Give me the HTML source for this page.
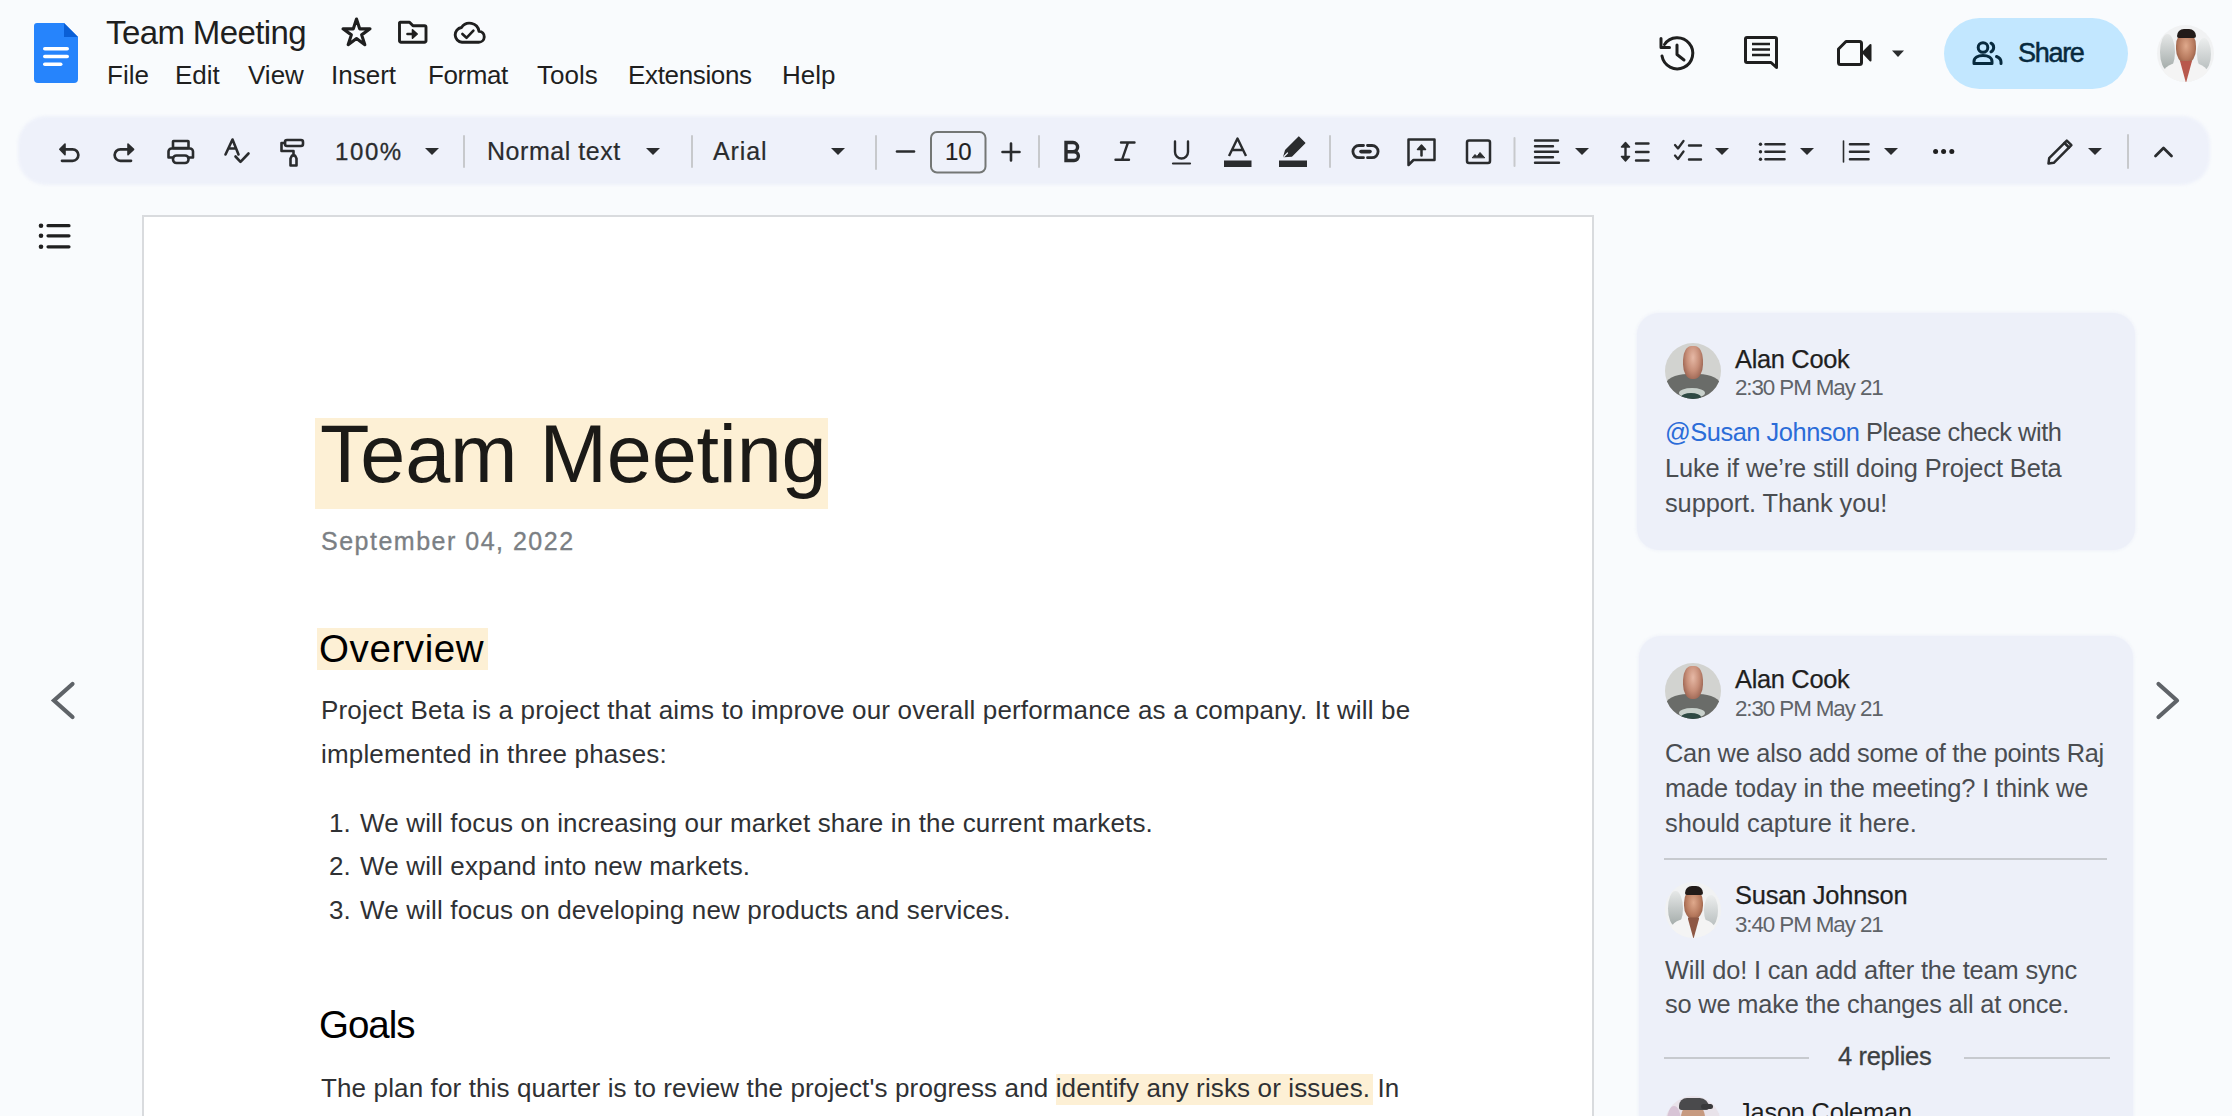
<!DOCTYPE html>
<html><head><meta charset="utf-8">
<style>
*{box-sizing:border-box;margin:0;padding:0}
html,body{width:2232px;height:1116px;overflow:hidden;background:#f9fbfd;font-family:"Liberation Sans",sans-serif;color:#1f1f1f}
.a{position:absolute;white-space:nowrap;line-height:1}
svg.i{position:absolute;overflow:visible}
</style></head><body>

<!-- Header -->
<svg class="i" style="left:34px;top:23px" width="44" height="60" viewBox="0 0 44 60">
  <path d="M3 0H30L44 14V56a4 4 0 0 1-4 4H4a4 4 0 0 1-4-4V3a3 3 0 0 1 3-3z" fill="#2684fc"/>
  <path d="M30 0L44 14H30z" fill="#0a5fd6"/>
  <rect x="9" y="24" width="26" height="3.6" rx="1.8" fill="#fff"/>
  <rect x="9" y="31.7" width="26" height="3.6" rx="1.8" fill="#fff"/>
  <rect x="9" y="39.4" width="19.5" height="3.6" rx="1.8" fill="#fff"/>
</svg>
<div class="a" style="left:106px;top:15.6px;font-size:33px;letter-spacing:-0.6px">Team Meeting</div>


<svg class="i" style="left:0;top:0" width="520" height="60" viewBox="0 0 520 60" fill="none" stroke="#1f1f1f" stroke-width="2.9" stroke-linejoin="round" stroke-linecap="round">
  <path d="M356.50 19.00 L359.67 28.83 L370.01 28.81 L361.64 34.87 L364.85 44.69 L356.50 38.60 L348.15 44.69 L351.36 34.87 L342.99 28.81 L353.33 28.83Z" stroke-width="3.1"/>
  <path d="M400 22.2H409.5L413 25.8H424.5A1.5 1.5 0 0 1 426 27.3V40.7A1.5 1.5 0 0 1 424.5 42.2H401A1.5 1.5 0 0 1 399.5 40.7V22.7Z"/>
  <path d="M407.5 34H414" stroke-width="2.6"/>
  <path d="M412.5 29.8L417.2 34L412.5 38.2Z" fill="#1f1f1f" stroke-width="1.6"/>
  <path d="M462 42.2H478.5A5.5 5.5 0 0 0 479 31.2A9.6 9.6 0 0 0 461.5 27.5A7.4 7.4 0 0 0 462 42.2Z"/>
  <path d="M462.4 34L466.5 37.8L473.4 30.6" stroke-width="2.6"/>
</svg>
<div class="a" style="left:107px;top:61.5px;font-size:26px;color:#1f1f1f">File</div>
<div class="a" style="left:175px;top:61.5px;font-size:26px">Edit</div>
<div class="a" style="left:248px;top:61.5px;font-size:26px">View</div>
<div class="a" style="left:331px;top:61.5px;font-size:26px">Insert</div>
<div class="a" style="left:428px;top:61.5px;font-size:26px;letter-spacing:-0.4px">Format</div>
<div class="a" style="left:537px;top:61.5px;font-size:26px">Tools</div>
<div class="a" style="left:628px;top:61.5px;font-size:26px;letter-spacing:-0.35px">Extensions</div>
<div class="a" style="left:782px;top:61.5px;font-size:26px">Help</div>


<!-- Toolbar -->
<div style="position:absolute;left:18px;top:116px;width:2192px;height:69px;border-radius:28px;background:#eef1fa;filter:blur(1.5px)"></div>
<svg class="i" style="left:0;top:0" width="2232" height="200" viewBox="0 0 2232 200" fill="none" stroke="#2a2c2e" stroke-width="2.6" stroke-linecap="round" stroke-linejoin="round">
  <!-- undo 58-79, 143-162 -->
  <path d="M64 149.3H72.6a5.75 5.75 0 0 1 0 11.5H62" stroke-width="2.7"/>
  <path d="M65 144L59.8 149.3L65 154.6Z" fill="#2a2c2e" stroke-width="1.6"/>
  <!-- redo 114-135 -->
  <path d="M128.5 149.3H120.4a5.75 5.75 0 0 0 0 11.5H131" stroke-width="2.7"/>
  <path d="M128 144L133.6 149.3L128 154.6Z" fill="#2a2c2e" stroke-width="1.6"/>
  <!-- print 167-194, 140-164 -->
  <rect x="173" y="141" width="15.5" height="7" rx="0.5"/>
  <path d="M173 157.5H168.5V151.5a3 3 0 0 1 3-3H190a3 3 0 0 1 3 3V157.5H188.5"/>
  <rect x="173" y="155.5" width="15.5" height="7.5" rx="3.5"/>
  <!-- spellcheck 224-249, 139-163 -->
  <path d="M225.5 154.5L232.5 139.5L238.5 154.5M228.5 148.5H236"/>
  <path d="M235.5 156.5L240.5 161.8L248.5 153.5"/>
  <!-- paint format 280-304, 139-167 -->
  <rect x="285" y="140" width="18" height="6" rx="2"/>
  <path d="M285 143H281.5V151H293.5V155.5"/>
  <path d="M290.5 165.5V158.5L292 155.5H295L296.5 158.5V165.5Z"/>
  <!-- dropdown arrows -->
  <g fill="#2a2c2e" stroke="none">
    <path d="M425 148H439L432 155z"/>
    <path d="M646 148H660L653 155z"/>
    <path d="M831 148H845L838 155z"/>
    <path d="M1575 148H1589L1582 155z"/>
    <path d="M1715 148H1729L1722 155z"/>
    <path d="M1800 148H1814L1807 155z"/>
    <path d="M1884 148H1898L1891 155z"/>
    <path d="M2088 148H2102L2095 155z"/>
    <path d="M1892 50.5H1904L1898 57z"/>
  </g>
  <!-- separators -->
  <g stroke="#c7c9cc" stroke-width="2">
    <path d="M464 136V167"/><path d="M692 136V167"/><path d="M876 136V169"/><path d="M1039 136V167"/>
    <path d="M1330 136V167"/><path d="M1514.5 138V166"/><path d="M2128 135V168"/>
  </g>
  <!-- minus / box / plus -->
  <path d="M897 151.5H914"/>
  <rect x="931" y="132" width="54.5" height="40.5" rx="6" stroke="#747775" stroke-width="2"/>
  <path d="M1011 143.5V160.5M1002.5 152H1019.5"/>
  <!-- B -->
  <path d="M1066 142.5H1073a4.6 4.6 0 0 1 0 9.2H1066ZM1066 151.7H1074a4.4 4.4 0 0 1 0 8.8H1066Z" stroke-width="3.4" stroke-linejoin="miter"/>
  <!-- I -->
  <path d="M1121 142.5H1134.5M1115.5 159.8H1129M1128 142.5L1122 159.8" stroke-width="2.4"/>
  <!-- U -->
  <path d="M1175 141.5V152a6.5 6.5 0 0 0 13 0V141.5" stroke-width="2.4"/>
  <path d="M1173 163.5H1190" stroke-width="2.2"/>
  <!-- A text color -->
  <path d="M1229 156L1237.5 138.5L1246 156M1232 150H1243" stroke-width="2.4" stroke-linecap="butt"/>
  <rect x="1224" y="160.5" width="27.5" height="6.5" fill="#2a2c2e" stroke="none"/>
  <!-- highlighter -->
  <path d="M1284 156.5L1285.8 150.2L1298.8 137.2L1304.6 143L1291.6 156Z" fill="#2a2c2e" stroke-width="1.6"/>
  <path d="M1284 156.5L1287.5 153" stroke="#eef1fa" stroke-width="1.2"/>
  <rect x="1279" y="160.5" width="28" height="6.5" fill="#2a2c2e" stroke="none"/>
  <!-- link 1351-1380, 145-160 -->
  <path d="M1363.5 145.5H1359a6.1 6.1 0 0 0 0 12.2H1363.5M1367.5 145.5H1372a6.1 6.1 0 0 1 0 12.2H1367.5" stroke-width="2.8"/><path d="M1361 151.6H1370" stroke-width="3.6"/>
  <!-- add comment 1407-1436, 138-165.5 -->
  <path d="M1409 139.5H1434.5V160H1413.5L1408.5 165V139.5Z" stroke-width="2.5"/>
  <path d="M1421.5 155.5V147" stroke-width="2.5"/>
  <path d="M1417.5 149.5L1421.5 145L1425.5 149.5Z" fill="#2a2c2e" stroke-width="1.5"/>
  <!-- image 1465.5-1491, 139-164.5 -->
  <rect x="1467" y="140.5" width="23" height="22.5" rx="2" stroke-width="2.5"/>
  <path d="M1472.5 157.5L1475 154.5L1477 156.5L1480 152.5L1484.5 157.5Z" fill="#2a2c2e" stroke-width="1"/>
  <!-- align left 1534-1560, 139-164 -->
  <path d="M1535 140.5H1558M1535 146.2H1553M1535 151.7H1558M1535 157.2H1553M1535 162.7H1559" stroke-width="2.4"/>
  <!-- line spacing 1621-1649, 142-161 -->
  <path d="M1625.5 145.5V158" stroke-width="2.4"/>
  <path d="M1621.5 147L1625.5 142.5L1629.5 147ZM1621.5 156.5L1625.5 161L1629.5 156.5Z" fill="#2a2c2e" stroke-width="1.5"/>
  <path d="M1636 143.5H1648.5M1636 152H1648.5M1636 160.5H1648.5" stroke-width="2.4"/>
  <!-- checklist 1674-1701, 140-161 -->
  <path d="M1675 145L1678 148.5L1683.5 141M1675 155.5L1678 159L1683.5 151.5" stroke-width="2.3"/>
  <path d="M1689 145.5H1701M1689 159.5H1701" stroke-width="2.4"/>
  <!-- bullets 1759-1785, 142-161 -->
  <g fill="#2a2c2e" stroke="none"><circle cx="1760.5" cy="144.2" r="1.7"/><circle cx="1760.5" cy="151.7" r="1.7"/><circle cx="1760.5" cy="159.3" r="1.7"/></g>
  <path d="M1765.5 144.2H1784.5M1765.5 151.7H1784.5M1765.5 159.3H1784.5" stroke-width="2.6"/>
  <!-- numbered 1842-1869, 140.5-162.5 -->
  <path d="M1843.5 141V162" stroke-width="1.6"/>
  <path d="M1850 144.2H1868.5M1850 151.7H1868.5M1850 159.3H1868.5" stroke-width="2.6"/>
  <!-- more dots -->
  <g fill="#1f1f1f" stroke="none"><circle cx="1935.6" cy="151.6" r="2.5"/><circle cx="1943.6" cy="151.6" r="2.5"/><circle cx="1951.8" cy="151.6" r="2.5"/></g>
  <!-- pencil 2047-2073, 139-165 -->
  <path d="M2048.5 163.5L2049.2 158.2L2066.8 140.6L2071.4 145.2L2053.8 162.8Z" stroke-width="2.5"/>
  <path d="M2064.5 143L2069 147.5" stroke-width="2.5"/>
  <!-- caret -->
  <path d="M2155.5 156L2163.5 148L2171.5 156" stroke-width="2.8"/>
</svg>
<div class="a" style="left:335px;top:139.7px;font-size:24px;color:#2a2c2e;letter-spacing:1.6px;-webkit-text-stroke:0.3px #2a2c2e">100%</div>
<div class="a" style="left:487px;top:138.8px;font-size:25px;color:#2a2c2e;letter-spacing:0.55px;-webkit-text-stroke:0.2px #2a2c2e">Normal text</div>
<div class="a" style="left:713px;top:138.8px;font-size:25px;color:#2a2c2e;letter-spacing:0.9px;-webkit-text-stroke:0.2px #2a2c2e">Arial</div>
<div class="a" style="left:945px;top:139.7px;font-size:24px;color:#1f1f1f;-webkit-text-stroke:0.2px #1f1f1f">10</div>


<!-- Header right -->
<svg class="i" style="left:0;top:0" width="2232" height="110" viewBox="0 0 2232 110" fill="none" stroke="#1f1f1f" stroke-width="3" stroke-linecap="round" stroke-linejoin="round">
  <!-- history 1659.5-1694.5, 35.5-70.5 -->
  <path d="M1662 56A15.5 15.5 0 1 0 1664.5 44.5"/>
  <path d="M1661 38.5V47.5H1669.5" stroke-width="3"/>
  <path d="M1677 45V54.5L1684 60"/>
  <!-- comment 1744-1778.5, 35.5-70 -->
  <path d="M1747 37.5H1775A1.5 1.5 0 0 1 1776.5 39V67.5L1771 62.5H1747A1.5 1.5 0 0 1 1745.5 61V39A1.5 1.5 0 0 1 1747 37.5Z" stroke-width="3"/>
  <path d="M1752 44H1770M1752 49.5H1770M1752 55H1770" stroke-width="2.6" stroke-linecap="butt"/>
  <!-- video 1837-1871, 39.7-66.5 -->
  <path d="M1846 41.5H1859.5A2 2 0 0 1 1861.5 43.5V62.5A2 2 0 0 1 1859.5 64.5H1840.5A2 2 0 0 1 1838.5 62.5V49Z" stroke-width="3"/>
  <path d="M1863 52.5L1870.5 45V60.5Z" fill="#1f1f1f" stroke-width="2"/>
</svg>
<div style="position:absolute;left:1944px;top:18px;width:184px;height:71px;border-radius:36px;background:#c2e7ff"></div>
<svg class="i" style="left:1972px;top:41px" width="31" height="24" viewBox="0 0 31 24" fill="none" stroke="#072a3e" stroke-width="3" stroke-linecap="round">
  <circle cx="11" cy="6.5" r="4.8"/>
  <path d="M2 22.5V20.5C2 16.5 6 14.5 11 14.5S20 16.5 20 20.5V22.5Z" stroke-linejoin="round"/>
  <path d="M19 2.2A4.8 4.8 0 0 1 19 10.8"/>
  <path d="M24.5 15.5C27 16.5 29 18.5 29 21V22.5"/>
</svg>
<div class="a" style="left:2018px;top:39.5px;font-size:27px;color:#072a3e;letter-spacing:-1.3px;-webkit-text-stroke:0.5px #072a3e">Share</div>
<!-- avatar top right -->
<div style="position:absolute;left:2157px;top:25px;width:57px;height:57px;border-radius:50%;overflow:hidden;background:#f1f2f3">
  <div style="position:absolute;left:3.0px;top:9.0px;width:15.0px;height:36.0px;border-radius:50%;background:linear-gradient(#e6e8e8,#a3aba9)"></div>
  <div style="position:absolute;left:40.0px;top:13.0px;width:14.0px;height:32.0px;border-radius:50%;background:linear-gradient(#eceeee,#b9bfbf)"></div>
  <div style="position:absolute;left:6.0px;top:37.0px;width:45.0px;height:26.0px;border-radius:45% 45% 0 0;background:#f4f4f4"></div>
  <div style="position:absolute;left:19.0px;top:7.0px;width:20.0px;height:31.0px;border-radius:45%;background:radial-gradient(ellipse at 50% 45%,#dfa98c 0%,#b77a5e 55%,#7a4a38 100%)"></div>
  <div style="position:absolute;left:20.0px;top:4.0px;width:19.0px;height:9.0px;border-radius:10px 10px 3px 3px;background:#221b19"></div>
  <div style="position:absolute;left:23.0px;top:36.0px;width:12.0px;height:22.0px;clip-path:polygon(0 0,100% 0,50% 100%);background:#b8584c"></div>
</div>

<!-- Left rail -->
<svg class="i" style="left:0;top:0" width="150" height="760" viewBox="0 0 150 760" fill="none" stroke="#1f1f1f" stroke-linecap="round">
  <g fill="#1f1f1f" stroke="none"><circle cx="41" cy="225.7" r="2.3"/><circle cx="41" cy="235.8" r="2.3"/><circle cx="41" cy="246.8" r="2.3"/></g>
  <path d="M48 225.7H69M48 235.8H69M48 246.8H69" stroke-width="3.2"/>
  <path d="M72.5 684L54 700.5L72.5 717" stroke="#5f6368" stroke-width="4.2"/>
</svg>
<!-- Page -->
<div style="position:absolute;left:142px;top:215px;width:1452px;height:1000px;background:#fff;border:2px solid #d9dbde;border-bottom:none"></div>
<div style="position:absolute;left:315px;top:417.5px;width:512.5px;height:91px;background:#fdf0d5"></div>
<div class="a" style="left:320px;top:414.4px;font-size:81px;color:#1b1a17;letter-spacing:-0.2px">Team Meeting</div>
<div class="a" style="left:321px;top:528.8px;font-size:25px;color:#7b7f84;letter-spacing:1.5px;-webkit-text-stroke:0.35px #7b7f84">September 04, 2022</div>
<div style="position:absolute;left:317px;top:628px;width:171px;height:41.5px;background:#fdf0d5"></div>
<div class="a" style="left:319px;top:629.9px;font-size:38.5px;color:#000;letter-spacing:0.6px">Overview</div>
<div class="a" style="left:321px;top:697px;font-size:26px;color:#2f3134;letter-spacing:0.17px">Project Beta is a project that aims to improve our overall performance as a company. It will be</div>
<div class="a" style="left:321px;top:741px;font-size:26px;color:#2f3134;letter-spacing:0.17px">implemented in three phases:</div>
<div class="a" style="left:329px;top:810.4px;font-size:26px;color:#2f3134">1.</div>
<div class="a" style="left:360px;top:810.4px;font-size:26px;color:#2f3134;letter-spacing:0.15px">We will focus on increasing our market share in the current markets.</div>
<div class="a" style="left:329px;top:853.3px;font-size:26px;color:#2f3134">2.</div>
<div class="a" style="left:360px;top:853.3px;font-size:26px;color:#2f3134;letter-spacing:0.15px">We will expand into new markets.</div>
<div class="a" style="left:329px;top:897px;font-size:26px;color:#2f3134">3.</div>
<div class="a" style="left:360px;top:897px;font-size:26px;color:#2f3134;letter-spacing:0.15px">We will focus on developing new products and services.</div>
<div class="a" style="left:319px;top:1006.4px;font-size:38.5px;color:#000;letter-spacing:-1px">Goals</div>
<div style="position:absolute;left:1056px;top:1073.5px;width:317px;height:31.5px;background:#fdf0d5"></div>
<div class="a" style="left:321px;top:1074.7px;font-size:26px;color:#2f3134;letter-spacing:0.13px">The plan for this quarter is to review the project's progress and identify any risks or issues. In</div>


<!-- Comments -->
<div style="position:absolute;left:1637px;top:313px;width:498px;height:237px;border-radius:22px;background:#edf0f9;box-shadow:0 0 3px 1px rgba(237,240,249,.8)"></div>
<div style="position:absolute;left:1665px;top:343px;width:56px;height:56px;border-radius:50%;overflow:hidden;background:#d2d3d0">
  <div style="position:absolute;left:0;top:31px;width:56px;height:30px;border-radius:40% 40% 0 0;background:#6a6c69;filter:blur(.6px)"></div>
  <div style="position:absolute;left:14px;top:45px;width:26px;height:10px;border-radius:50%;background:#c9d1cc;filter:blur(.6px)"></div>
  <div style="position:absolute;left:16px;top:50px;width:20px;height:8px;border-radius:50%;background:#2f4a44"></div>
  <div style="position:absolute;left:18px;top:3px;width:20px;height:33px;border-radius:42% 42% 45% 45%;background:radial-gradient(ellipse at 50% 35%,#e6b9a6 0%,#c78e78 45%,#7f4a3a 100%);filter:blur(.5px)"></div>
</div>
<div class="a" style="left:1735px;top:346.5px;font-size:25.4px;color:#1f1f1f;letter-spacing:-0.3px;-webkit-text-stroke:0.25px #1f1f1f">Alan Cook</div>
<div class="a" style="left:1735px;top:377px;font-size:22.4px;color:#5f6368;letter-spacing:-1.1px">2:30 PM May 21</div>
<div class="a" style="left:1665px;top:420px;font-size:25.4px;color:#4a4d51;letter-spacing:-0.46px"><span style="color:#2b6cd8">@Susan Johnson</span> Please check with</div>
<div class="a" style="left:1665px;top:456px;font-size:25.4px;color:#4a4d51;letter-spacing:-0.11px">Luke if we’re still doing Project Beta</div>
<div class="a" style="left:1665px;top:491px;font-size:25.4px;color:#4a4d51;letter-spacing:-0.09px">support. Thank you!</div>

<div style="position:absolute;left:1639px;top:636px;width:494px;height:522px;border-radius:22px;background:#edf0f9;box-shadow:0 0 3px 1px rgba(237,240,249,.8)"></div>
<div style="position:absolute;left:1665px;top:663px;width:56px;height:56px;border-radius:50%;overflow:hidden;background:#d2d3d0">
  <div style="position:absolute;left:0;top:31px;width:56px;height:30px;border-radius:40% 40% 0 0;background:#6a6c69;filter:blur(.6px)"></div>
  <div style="position:absolute;left:14px;top:45px;width:26px;height:10px;border-radius:50%;background:#c9d1cc;filter:blur(.6px)"></div>
  <div style="position:absolute;left:16px;top:50px;width:20px;height:8px;border-radius:50%;background:#2f4a44"></div>
  <div style="position:absolute;left:18px;top:3px;width:20px;height:33px;border-radius:42% 42% 45% 45%;background:radial-gradient(ellipse at 50% 35%,#e6b9a6 0%,#c78e78 45%,#7f4a3a 100%);filter:blur(.5px)"></div>
</div>
<div class="a" style="left:1735px;top:666.5px;font-size:25.4px;color:#1f1f1f;letter-spacing:-0.3px;-webkit-text-stroke:0.25px #1f1f1f">Alan Cook</div>
<div class="a" style="left:1735px;top:697.5px;font-size:22.4px;color:#5f6368;letter-spacing:-1.1px">2:30 PM May 21</div>
<div class="a" style="left:1665px;top:741px;font-size:25.4px;color:#4a4d51;letter-spacing:-0.26px">Can we also add some of the points Raj</div>
<div class="a" style="left:1665px;top:775.5px;font-size:25.4px;color:#4a4d51;letter-spacing:-0.12px">made today in the meeting? I think we</div>
<div class="a" style="left:1665px;top:811px;font-size:25.4px;color:#4a4d51;letter-spacing:0.02px">should capture it here.</div>
<div style="position:absolute;left:1664px;top:858px;width:443px;height:2px;background:#c7cacf"></div>
<div style="position:absolute;left:1665px;top:882px;width:56px;height:56px;border-radius:50%;overflow:hidden;background:#f1f2f3">
  <div style="position:absolute;left:2.9px;top:8.8px;width:14.7px;height:35.4px;border-radius:50%;background:linear-gradient(#e6e8e8,#a3aba9)"></div>
  <div style="position:absolute;left:39.3px;top:12.8px;width:13.8px;height:31.4px;border-radius:50%;background:linear-gradient(#eceeee,#b9bfbf)"></div>
  <div style="position:absolute;left:5.9px;top:36.4px;width:44.2px;height:25.5px;border-radius:45% 45% 0 0;background:#f4f4f4"></div>
  <div style="position:absolute;left:18.7px;top:6.9px;width:19.6px;height:30.5px;border-radius:45%;background:radial-gradient(ellipse at 50% 45%,#dfa98c 0%,#b77a5e 55%,#7a4a38 100%)"></div>
  <div style="position:absolute;left:19.6px;top:3.9px;width:18.7px;height:8.8px;border-radius:10px 10px 3px 3px;background:#221b19"></div>
  <div style="position:absolute;left:22.6px;top:35.4px;width:11.8px;height:21.6px;clip-path:polygon(0 0,100% 0,50% 100%);background:#8e5845"></div>
</div>
<div class="a" style="left:1735px;top:883px;font-size:25.4px;color:#1f1f1f;letter-spacing:-0.2px;-webkit-text-stroke:0.25px #1f1f1f">Susan Johnson</div>
<div class="a" style="left:1735px;top:914px;font-size:22.4px;color:#5f6368;letter-spacing:-1.1px">3:40 PM May 21</div>
<div class="a" style="left:1665px;top:957.5px;font-size:25.4px;color:#4a4d51;letter-spacing:-0.15px">Will do! I can add after the team sync</div>
<div class="a" style="left:1665px;top:992px;font-size:25.4px;color:#4a4d51;letter-spacing:-0.19px">so we make the changes all at once.</div>
<div style="position:absolute;left:1664px;top:1056.5px;width:145px;height:2px;background:#c7cacf"></div>
<div style="position:absolute;left:1964px;top:1056.5px;width:146px;height:2px;background:#c7cacf"></div>
<div class="a" style="left:1838px;top:1044px;font-size:25.4px;color:#3c3f41;letter-spacing:-0.3px;-webkit-text-stroke:0.3px #3c3f41">4 replies</div>
<div style="position:absolute;left:1665px;top:1096px;width:56px;height:56px;border-radius:50%;overflow:hidden;background:#e9e3ea">
  <div style="position:absolute;left:2px;top:10px;width:14px;height:30px;border-radius:50%;background:#d8c4d6"></div>
  <div style="position:absolute;left:16px;top:8px;width:24px;height:30px;border-radius:45%;background:#c79a80"></div>
  <div style="position:absolute;left:14px;top:2px;width:30px;height:12px;border-radius:12px 14px 4px 4px;background:#4a4a4c"></div>
  <div style="position:absolute;left:36px;top:8px;width:12px;height:5px;border-radius:3px;background:#3a3a3c"></div>
</div>
<div class="a" style="left:1738px;top:1100px;font-size:25.4px;color:#1f1f1f;letter-spacing:-0.2px">Jason Coleman</div>
<svg class="i" style="left:0;top:0" width="2232" height="760" viewBox="0 0 2232 760" fill="none">
  <path d="M2158.5 684L2177 700.5L2158.5 717" stroke="#5f6368" stroke-width="4.2" stroke-linecap="round" stroke-linejoin="round"/>
</svg>

</body></html>
